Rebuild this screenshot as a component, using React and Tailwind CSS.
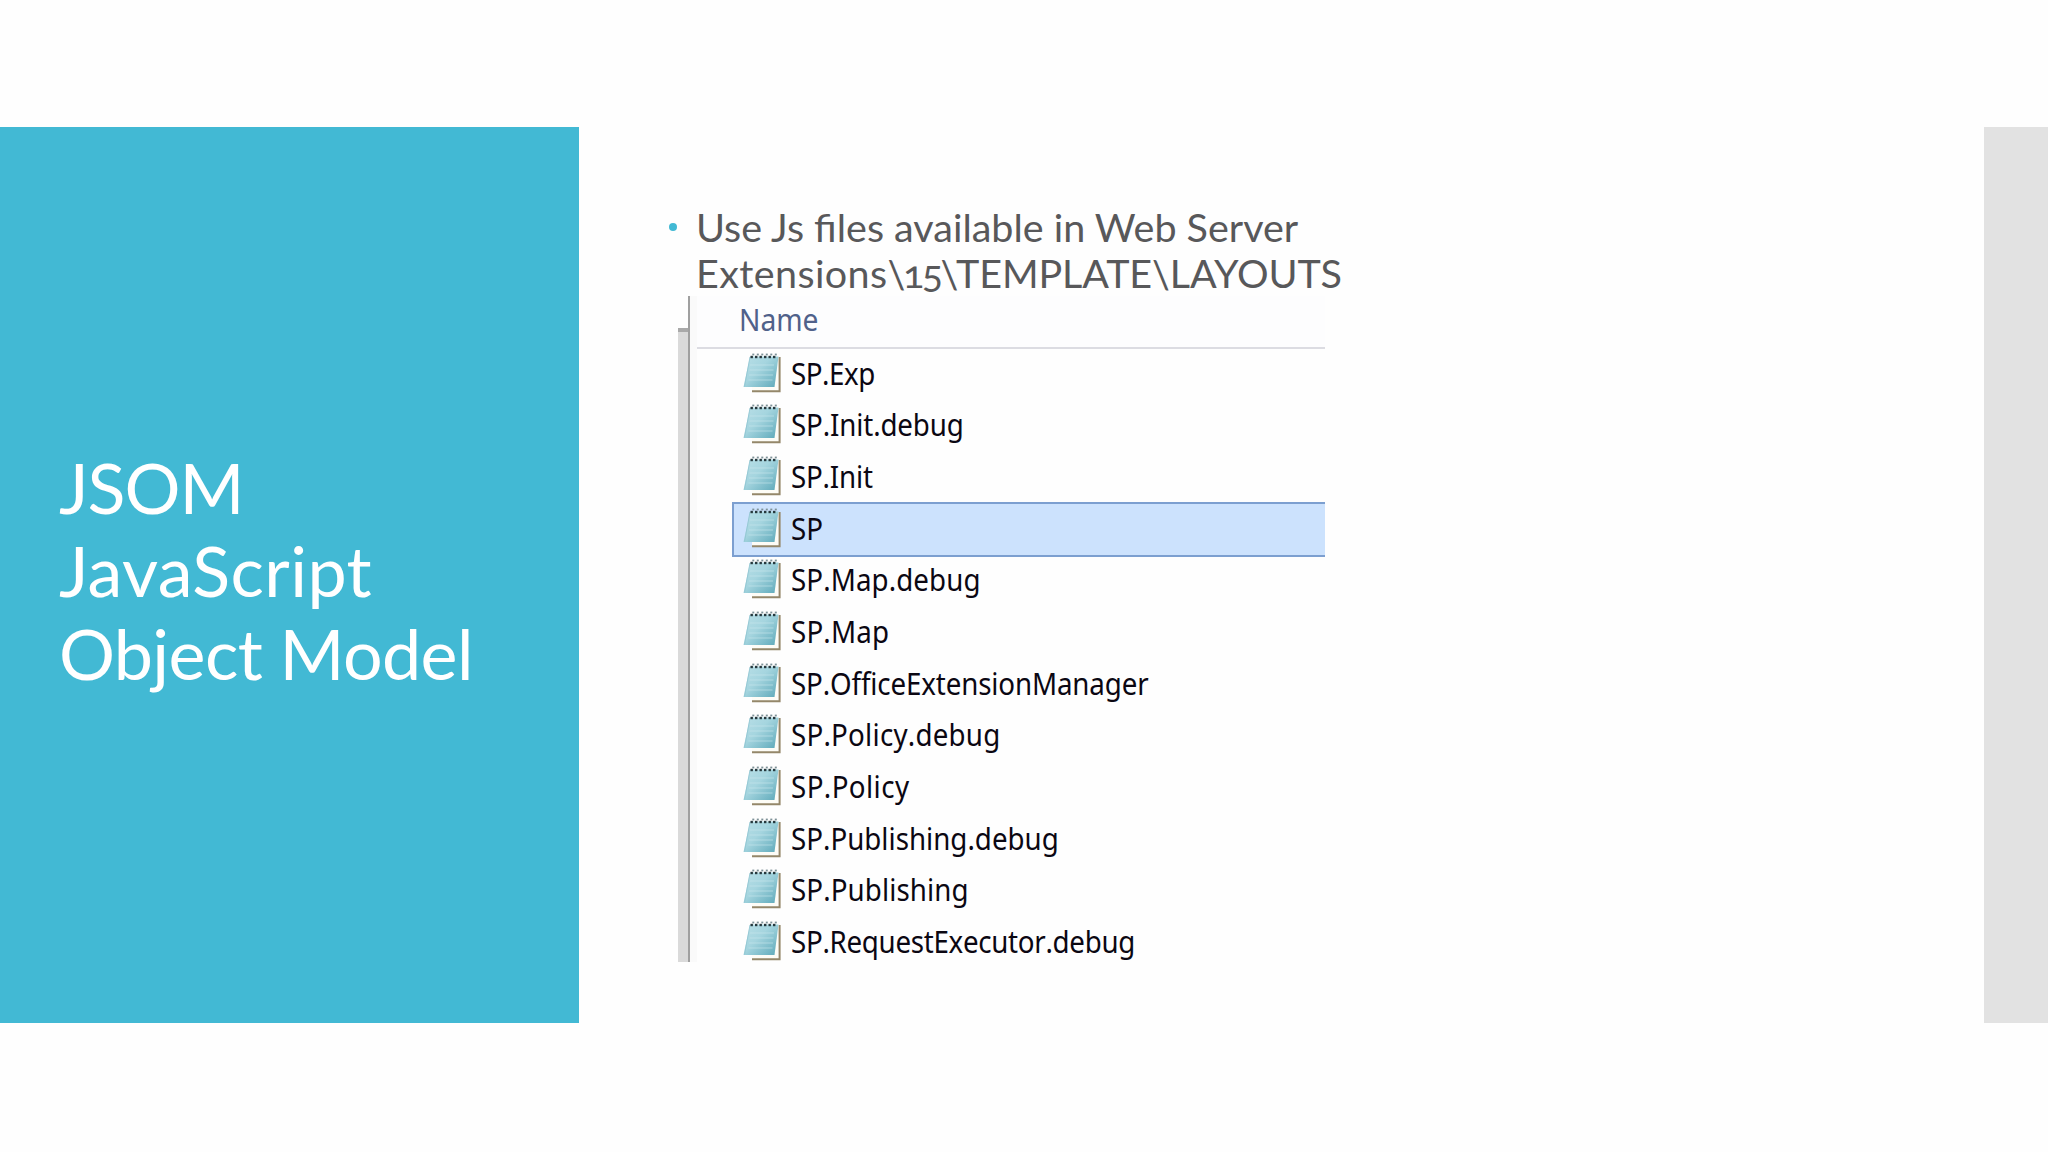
const files = [
  { name: "SP.Exp", tracking: "tracking-[-0.5px]" },
  { name: "SP.Init.debug", tracking: "tracking-[-0.15px]" },
  { name: "SP.Init", tracking: "tracking-[-0.2px]" },
  { name: "SP", tracking: "tracking-normal" },
  { name: "SP.Map.debug", tracking: "tracking-[0.1px]" },
  { name: "SP.Map", tracking: "tracking-[0.2px]" },
  { name: "SP.OfficeExtensionManager", tracking: "tracking-[-0.15px]" },
  { name: "SP.Policy.debug", tracking: "tracking-[0.25px]" },
  { name: "SP.Policy", tracking: "tracking-[0.45px]" },
  { name: "SP.Publishing.debug", tracking: "tracking-normal" },
  { name: "SP.Publishing", tracking: "tracking-[0.1px]" },
  { name: "SP.RequestExecutor.debug", tracking: "tracking-[-0.32px]" },
];

const spiral = [8.5, 13, 17.5, 22, 26.5, 31];

const NotepadIcon = () => (
  <svg className="h-10 w-[38px] shrink-0" viewBox="0 0 38 40">
    <defs>
      <linearGradient id="pad" x1="0" y1="0" x2="1" y2="0.9">
        <stop offset="0" stopColor="#b9dfe7" />
        <stop offset="0.45" stopColor="#a5d5df" />
        <stop offset="1" stopColor="#63acbc" />
      </linearGradient>
    </defs>
    {/* back sheet with its brown edge */}
    <path d="M9 4H37V39H9Z" fill="#fdfcf6" />
    <path d="M36.6 4V38.2H9" fill="none" stroke="#94876a" strokeWidth="2" />
    {/* front page */}
    <path d="M7 3.5H35.5L31.5 34H0.5Z" fill="url(#pad)" />
    <path d="M7 4L1.5 33.5" stroke="#8fc4d0" strokeWidth="0.8" />
    <path
      d="M7 12H31M6.5 17H30.5M6 22H30M5.5 27H29.5"
      stroke="#c9e8ee"
      strokeWidth="1.2"
      opacity="0.6"
    />
    {/* spiral binding */}
    {spiral.map((x) => (
      <g key={x}>
        <rect x={x - 1} y="2.8" width="2.4" height="2.4" fill="#26383d" />
        <rect x={x + 0.8} y="0.6" width="2" height="1.8" fill="#7d9197" />
      </g>
    ))}
  </svg>
);

const FileRow = ({ name, tracking, selected }) => (
  <li className="flex h-[51.65px] items-center">
    <div
      className={`-my-1 flex h-[55px] w-full items-center gap-2.5 border-y-[2.5px] border-l-[2.5px] pl-[9px] ${
        selected ? "border-[#7c9fd0] bg-[#cce2fd]" : "border-transparent"
      }`}
    >
      <div className="-mt-1">
        <NotepadIcon />
      </div>
      <span
        className={`-mt-0.5 origin-left scale-x-[0.924] whitespace-nowrap text-[30px] leading-none text-[#0b0712] [font-kerning:none] ${tracking}`}
      >
        {name}
      </span>
    </div>
  </li>
);

const FileList = () => (
  <div className="flex h-[666px] w-[647px] font-['Noto_Sans',sans-serif]">
    {/* Scrollbar edge */}
    <div className="flex w-3 flex-col border-r-2 border-[#a0a0a0] pt-8">
      <div className="flex-1 border-t-4 border-[#a9a9a9] bg-[#dadada]" />
    </div>
    <div className="w-[7px] bg-[#fafafa]" />
    <div className="flex-1">
      <div className="h-[53px] border-b-2 border-[#dcdce2] bg-[#fdfdfe] pl-[42px]">
        <span className="inline-block origin-left scale-x-[0.94] pt-2 text-[30px] leading-8 text-[#50618a]">
          Name
        </span>
      </div>
      <ul className="pl-[35px]">
        {files.map(({ name, tracking }) => (
          <FileRow
            key={name}
            name={name}
            tracking={tracking}
            selected={name === "SP"}
          />
        ))}
      </ul>
    </div>
  </div>
);

const App = () => {
  return (
    <div className="flex h-[1152px] w-[2048px] overflow-hidden bg-[#fefefe] pt-[127px] font-[Lato,sans-serif]">
      {/* Title panel */}
      <aside className="h-[896px] w-[579px] bg-[#42b9d4] pl-[59px] pt-[319px] text-[70px] leading-[83px] text-white">
        <h1>
          <span className="block tracking-[-1px]">JSOM</span>
          <span className="block tracking-[0.4px]">JavaScript</span>
          <span className="block tracking-[-0.6px]">Object Model</span>
        </h1>
      </aside>

      <main className="flex-1 pl-[89px] pt-[77px]">
        <div className="flex h-[92px] text-[39.5px] leading-[46px] text-[#58585a]">
          <span className="mt-[19px] ml-px mr-[19px] h-2 w-2 rounded-full bg-[#42b9d4]" />
          <p className="whitespace-nowrap">
            <span className="block">Use Js files available in Web Server</span>
            <span className="block oldstyle-nums">
              <span className="tracking-[0.4px]">Extensions</span>
              <span className="tracking-[-2.5px]">\15\</span>
              <span className="tracking-[-0.1px]">TEMPLATE\LAYOUTS</span>
            </span>
          </p>
        </div>
        <div className="pl-[10px]">
          <FileList />
        </div>
      </main>

      {/* Slide edge */}
      <div className="h-[896px] w-16 bg-[#e2e2e2]" />
    </div>
  );
};

export default App;
